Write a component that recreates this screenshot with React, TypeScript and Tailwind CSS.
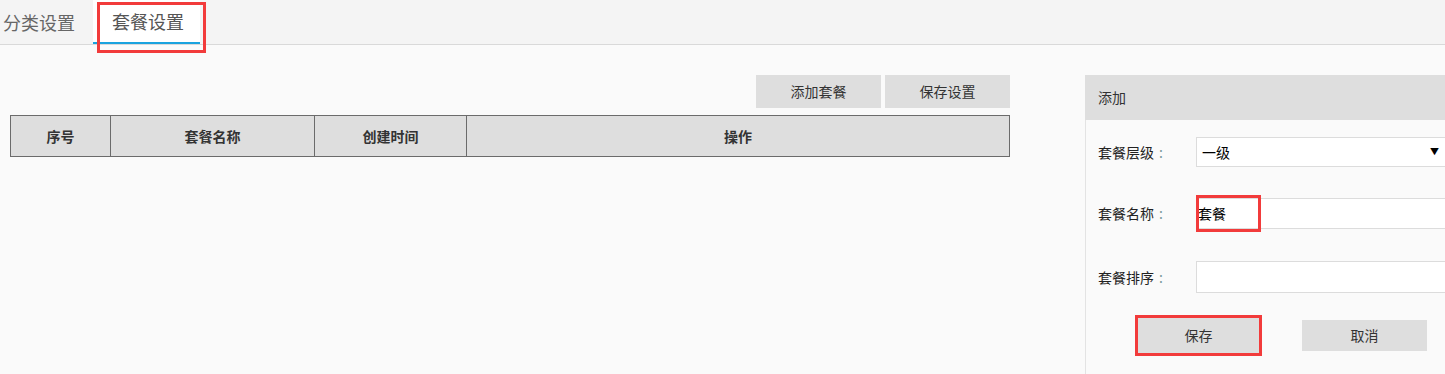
import React from "react";

const font = { fontFamily: '"Noto Sans CJK SC", "Noto Sans", sans-serif' };

function Tabs() {
	return (
		<div className="relative flex h-[45px] border-b border-[#d9d9d9] bg-[#f4f4f4]">
			<div className="flex h-[44px] w-[93px] items-center pl-[3px] text-[18px] text-[#666]">分类设置</div>
			<div className="flex h-[44px] w-[107px] items-center border-b-2 border-[#1aa3df] bg-white pl-[19px] text-[18px] text-[#555]">
				套餐设置
			</div>
			{/* highlight box */}
			<div className="pointer-events-none absolute left-[97px] top-[2px] h-[51px] w-[109px] border-[3px] border-[#f23b3b]" />
		</div>
	);
}

function PackageTable() {
	const cols = [
		{ label: "序号", w: "w-[100px]" },
		{ label: "套餐名称", w: "w-[204px]" },
		{ label: "创建时间", w: "w-[152px]" },
		{ label: "操作", w: "" },
	];
	return (
		<table className="w-[1000px] border-collapse">
			<thead>
				<tr className="h-[41px] bg-[#dedede]">
					{cols.map((c) => (
						<th key={c.label} className={`${c.w} border border-[#6b6b6b] text-[14px] font-bold text-[#333]`}>
							{c.label}
						</th>
					))}
				</tr>
			</thead>
		</table>
	);
}

function Field({ label, children }: { label: string; children: React.ReactNode }) {
	return (
		<div className="flex items-center">
			<span className="w-[110px] pl-[12px] text-[14px] text-[#222]">
				{label}
				<span className="ml-[5px] text-[#7a9a9a]">:</span>
			</span>
			{children}
		</div>
	);
}

function AddPanel() {
	return (
		<div className="mt-[30px] w-[420px] shrink-0">
			<div className="flex h-[45px] items-center bg-[#dedede] pl-[13px] text-[14px] text-[#333]">添加</div>
			<div className="h-[260px] border-l border-[#e3e3e3] pt-[17px]">
				<Field label="套餐层级">
					<div className="relative flex h-[30px] w-[300px] items-center border border-[#dcdcdc] bg-white pl-[5px] text-[14px] text-black">
						一级
						<span className="absolute left-[233px] top-[7px] text-[9px]">▼</span>
					</div>
				</Field>
				<div className="mt-[31px]">
					<Field label="套餐名称">
						<div className="relative flex h-[31px] w-[300px] items-center border border-[#dcdcdc] bg-white pl-[1px] text-[14px] text-black">
							套餐
							<div className="pointer-events-none absolute left-[-1px] top-[-4px] h-[37px] w-[65px] border-[3px] border-[#f23b3b]" />
						</div>
					</Field>
				</div>
				<div className="mt-[32px]">
					<Field label="套餐排序">
						<div className="h-[32px] w-[300px] border border-[#dcdcdc] bg-white" />
					</Field>
				</div>
				<div className="mt-[25px] flex items-center">
					<div className="relative ml-[51px]">
						<button className="flex h-[35px] w-[123px] items-center justify-center bg-[#dedede] text-[14px] text-[#333]">保存</button>
						<div className="pointer-events-none absolute left-[-2px] top-[-3px] h-[41px] w-[127px] border-[3px] border-[#f23b3b]" />
					</div>
					<button className="ml-[42px] flex h-[31px] w-[125px] items-center justify-center bg-[#dedede] text-[14px] text-[#333]">取消</button>
				</div>
			</div>
		</div>
	);
}

export default function App() {
	return (
		<div className="h-[374px] w-[1445px] overflow-hidden bg-[#fafafa]" style={font}>
			<Tabs />
			<div className="flex">
				<div className="ml-[10px] w-[1000px] shrink-0">
					<div className="mt-[30px] flex justify-end gap-[4px]">
						<button className="h-[33px] w-[125px] bg-[#dedede] text-[14px] text-[#333]">添加套餐</button>
						<button className="h-[33px] w-[125px] bg-[#dedede] text-[14px] text-[#333]">保存设置</button>
					</div>
					<div className="mt-[7px]">
						<PackageTable />
					</div>
				</div>
				<div className="ml-[75px]">
					<AddPanel />
				</div>
			</div>
		</div>
	);
}
